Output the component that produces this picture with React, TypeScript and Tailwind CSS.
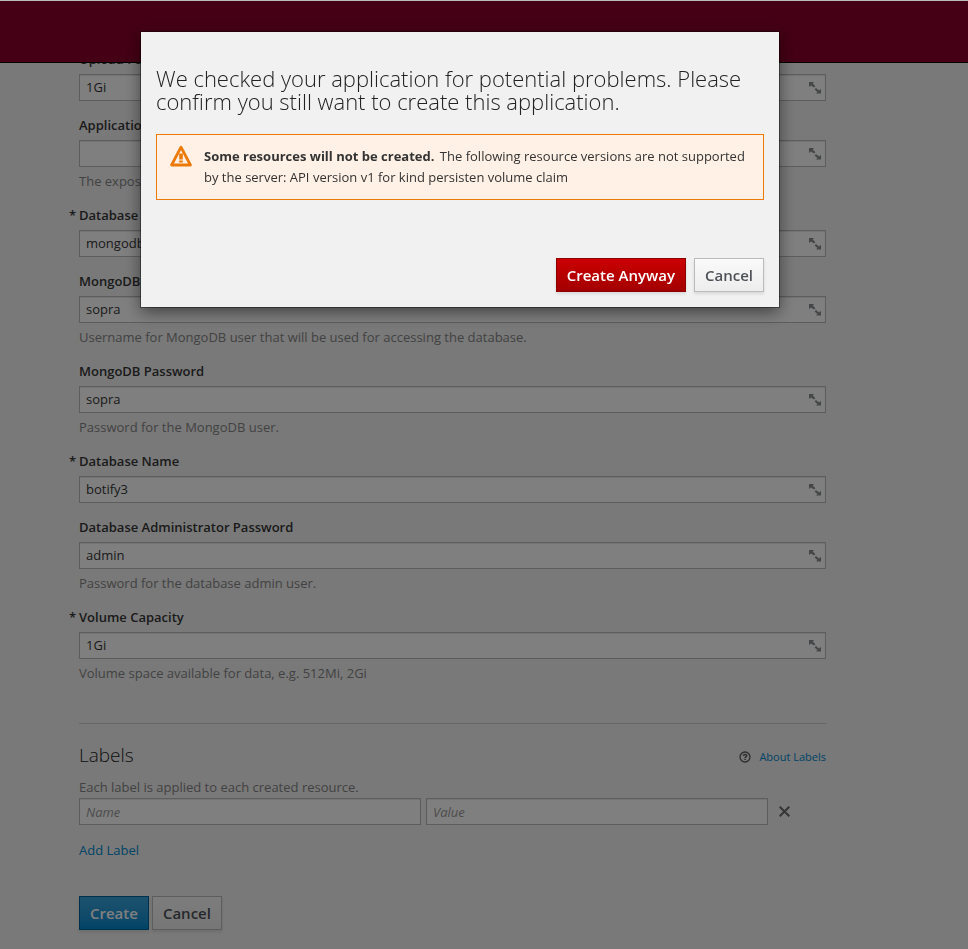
import { useState } from "react";

type Field = {
  id: string;
  label: string;
  value: string;
  help?: string;
  required?: boolean;
};

const fields: Field[] = [
  { id: "upload", label: "Upload Folder", value: "1Gi" },
  { id: "hostname", label: "Application Hostname", value: "", help: "The exposed hostname." },
  { id: "service", label: "Database Service Name", value: "mongodb", required: true },
  { id: "user", label: "MongoDB User", value: "sopra", help: "Username for MongoDB user that will be used for accessing the database." },
  { id: "password", label: "MongoDB Password", value: "sopra", help: "Password for the MongoDB user." },
  { id: "dbname", label: "Database Name", value: "botify3", required: true },
  { id: "admin", label: "Database Administrator Password", value: "admin", help: "Password for the database admin user." },
  { id: "volume", label: "Volume Capacity", value: "1Gi", help: "Volume space available for data, e.g. 512Mi, 2Gi", required: true },
];

const inputBox = "h-[27px] border border-[#bbb] bg-white shadow-[inset_0_1px_1px_rgba(3,3,3,0.1)]";
const button = "h-[34px] border px-2.5 text-[15px] font-semibold shadow-[0_2px_3px_rgba(3,3,3,0.1)]";
const defaultButton = "border-[#bbb] bg-linear-to-b from-[#fafafa] to-[#ededed] text-[#4d5258]";

const ExpandIcon = () => (
  <svg width="12" height="12" viewBox="0 0 12 12" fill="#8b8d8f">
    <path d="M0 0h5L3.8 1.5 6.4 4.2 4.9 5.4 2 3.4 0 5z" />
    <path d="M12 11.5H7l1.4-1.4L5.6 7.4 7 6l3 2.6L12 6.8z" />
  </svg>
);

const WarningIcon = () => (
  <svg className="-mt-px shrink-0" width="22" height="22" viewBox="0 0 22 22" fill="none">
    <path d="M11 2.2 20.4 20H1.6z" stroke="#ec7a08" strokeWidth="2.8" strokeLinejoin="round" />
    <path d="M9.2 8.6h3.6v5.8H9.2zM9.2 15.4h3.6v2H9.2z" fill="#ec7a08" />
  </svg>
);

const HelpIcon = () => (
  <svg width="12" height="12" viewBox="0 0 12 12" fill="none" stroke="#5a5a5a">
    <circle cx="6" cy="6" r="5" strokeWidth="1.3" />
    <path d="M4.3 4.7C4.4 3.2 7.8 3.1 7.7 4.8 7.6 5.8 6.1 5.8 6.1 7" strokeWidth="1.5" />
    <path d="M5.3 8.4h1.5" strokeWidth="1.4" />
  </svg>
);

const CloseIcon = () => (
  <svg width="11" height="11" viewBox="0 0 11 11" stroke="#6a6a6a" strokeWidth="2">
    <path d="M.7.7l9.6 9.6M10.3.7L.7 10.3" />
  </svg>
);

const FormField = ({ field }: { field: Field }) => (
  <div className="mb-3.5">
    <div className="mb-1 flex leading-[21px]">
      {field.required && <span className="-ml-2.5 w-2.5 font-semibold text-[#363636]">*</span>}
      <label htmlFor={field.id} className="font-semibold text-[#363636]">
        {field.label}
      </label>
    </div>
    <div className={`flex items-center ${inputBox}`}>
      <input
        id={field.id}
        type="text"
        defaultValue={field.value}
        className="h-full min-w-0 flex-1 bg-transparent px-1.5 pb-0.5 text-[#363636] outline-none"
      />
      <button type="button" aria-label={`Expand ${field.label}`} className="px-1">
        <ExpandIcon />
      </button>
    </div>
    {field.help && <p className="mt-1 leading-5 text-[#858585]">{field.help}</p>}
  </div>
);

const ConfirmDialog = ({ onClose }: { onClose: () => void }) => (
  <div className="fixed inset-0 z-20 flex items-start justify-center border-t border-[#bbb] bg-black/50 pt-[31px] pr-12">
    <div
      role="dialog"
      aria-modal="true"
      aria-labelledby="confirm-title"
      className="w-full max-w-[638px] bg-[#f1f1f1] px-[15px] pt-[35px] pb-[15px] shadow-[0_0_0_1px_rgba(0,0,0,0.4),0_5px_15px_rgba(0,0,0,0.5)]"
    >
      <h1 id="confirm-title" className="mb-[21px] text-[22px] leading-[23px] font-light text-[#222]">
        We checked your application for potential problems. Please confirm you still want to create this application.
      </h1>
      <div className="mb-[58px] flex gap-3 border border-[#ec7a08] bg-[#fff1e5] py-[11px] pr-3 pl-[13px]">
        <WarningIcon />
        <p className="leading-[21px] text-[#333]">
          <strong className="mr-0.5 font-bold">Some resources will not be created.</strong> The following resource versions
          are not supported by the server: API version v1 for kind persisten volume claim
        </p>
      </div>
      <div className="flex justify-end gap-2">
        <button
          type="button"
          onClick={onClose}
          className={`${button} border-[#8b0000] bg-linear-to-b from-[#cc0000] to-[#a30000] text-white`}
        >
          Create Anyway
        </button>
        <button type="button" onClick={onClose} className={`${button} ${defaultButton}`}>
          Cancel
        </button>
      </div>
    </div>
  </div>
);

const App = () => {
  const [open, setOpen] = useState(true);

  return (
    <div className="min-h-screen bg-[#f2f2f2] font-['Open_Sans',sans-serif] text-[13px]">
      <header className="fixed inset-x-0 top-0 z-10 h-[63px] border-b border-black bg-[#8a002c]" />

      <main className="pt-[49px] pr-[142px] pb-[19px] pl-[79px]">
        <form onSubmit={(e) => e.preventDefault()}>
          {fields.map((field) => (
            <FormField key={field.id} field={field} />
          ))}

          <section className="mt-10 border-t border-[#ccc] pt-5">
            <div className="flex items-center justify-between">
              <h2 className="text-[19px] leading-[22px] font-light text-[#222]">Labels</h2>
              <div className="flex items-center gap-2 pt-1">
                <HelpIcon />
                <a href="#about-labels" className="text-[11px] leading-4 text-[#0088ce]">
                  About Labels
                </a>
              </div>
            </div>
            <p className="mt-[11px] leading-[21px] text-[#858585]">Each label is applied to each created resource.</p>
            <div className="flex gap-[5px]">
              <input
                type="text"
                aria-label="Name"
                placeholder="Name"
                className={`min-w-0 flex-1 px-1.5 placeholder:text-[#999] placeholder:italic ${inputBox}`}
              />
              <input
                type="text"
                aria-label="Value"
                placeholder="Value"
                className={`min-w-0 flex-1 px-1.5 placeholder:text-[#999] placeholder:italic ${inputBox}`}
              />
              <button type="button" aria-label="Remove label" className="w-[53px] pl-1.5">
                <CloseIcon />
              </button>
            </div>
            <a href="#add-label" className="mt-[15px] block w-fit leading-5 text-[#0088ce]">
              Add Label
            </a>
          </section>

          <div className="mt-9 flex gap-[3px]">
            <button
              type="submit"
              onClick={() => setOpen(true)}
              className={`${button} border-[#00659c] bg-linear-to-b from-[#39a5dc] to-[#0088ce] text-white`}
            >
              Create
            </button>
            <button type="button" className={`${button} ${defaultButton}`}>
              Cancel
            </button>
          </div>
        </form>
      </main>

      {open && <ConfirmDialog onClose={() => setOpen(false)} />}
    </div>
  );
};

export default App;
